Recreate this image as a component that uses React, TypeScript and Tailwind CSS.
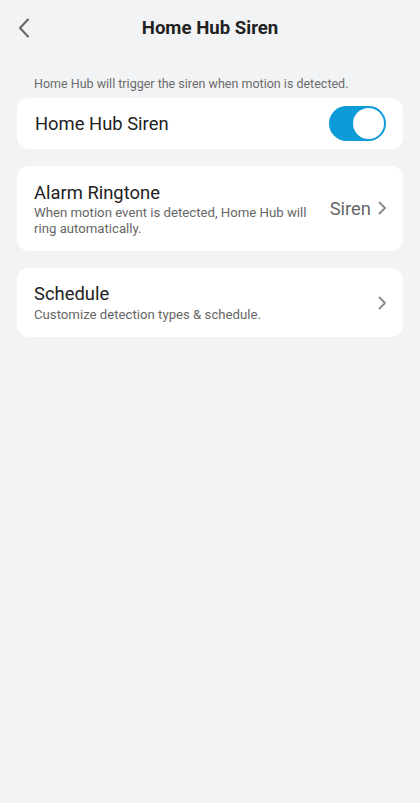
import React from "react";

function Chevron({ className }: { className?: string }) {
  return (
    <svg width="10" height="16" viewBox="0 0 10 16" fill="none" className={className}>
      <path d="M2.5 2.5 L8 8 L2.5 13.5" stroke="currentColor" strokeWidth="1.8" strokeLinecap="round" strokeLinejoin="round" />
    </svg>
  );
}

function Toggle({ on }: { on: boolean }) {
  return (
    <div
      className={`w-[57px] h-[35px] rounded-full p-[2px] flex items-center ${
        on ? "bg-[#0a9bd8] justify-end" : "bg-[#d9d9d9] justify-start"
      }`}
    >
      <div className="w-[31px] h-[31px] rounded-full bg-white"></div>
    </div>
  );
}

export default function App() {
  return (
    <div className="min-h-[803px] w-full bg-[#f2f3f5] font-['Roboto',sans-serif] text-[#222]">
      {/* header */}
      <div className="relative flex items-center justify-center h-[58px]">
        <button className="absolute left-[16px] top-[17px] text-[#666]">
          <svg width="16" height="22" viewBox="0 0 16 22" fill="none">
            <path d="M12 2.5 L4 11 L12 19.5" stroke="currentColor" strokeWidth="2" strokeLinecap="round" strokeLinejoin="round" />
          </svg>
        </button>
        <h1 className="text-[18.6px] font-bold text-[#222]">Home Hub Siren</h1>
      </div>

      <p className="px-[34px] mt-[17px] text-[12.5px] leading-[18px] text-[#6b6b6b]">
        Home Hub will trigger the siren when motion is detected.
      </p>

      <div className="px-[17px] mt-[5px] flex flex-col gap-[17px]">
        <div className="bg-white rounded-[12px] h-[51px] pl-[18px] pr-[17px] flex items-center justify-between">
          <span className="text-[18.4px]">Home Hub Siren</span>
          <Toggle on={true} />
        </div>

        <div className="bg-white rounded-[12px] h-[85px] pl-[17px] pr-[16px] flex items-center justify-between">
          <div className="flex flex-col">
            <span className="text-[18.4px] leading-[24px]">Alarm Ringtone</span>
            <span className="text-[13.2px] leading-[16px] text-[#666] w-[282px]">
              When motion event is detected, Home Hub will ring automatically.
            </span>
          </div>
          <div className="flex items-center gap-[6px] text-[#666]">
            <span className="text-[18.4px]">Siren</span>
            <Chevron className="text-[#888]" />
          </div>
        </div>

        <div className="bg-white rounded-[12px] h-[69px] pl-[17px] pr-[16px] flex items-center justify-between">
          <div className="flex flex-col">
            <span className="text-[18.4px] leading-[24px]">Schedule</span>
            <span className="text-[13.2px] leading-[18px] text-[#666]">Customize detection types &amp; schedule.</span>
          </div>
          <Chevron className="text-[#888]" />
        </div>
      </div>
    </div>
  );
}
